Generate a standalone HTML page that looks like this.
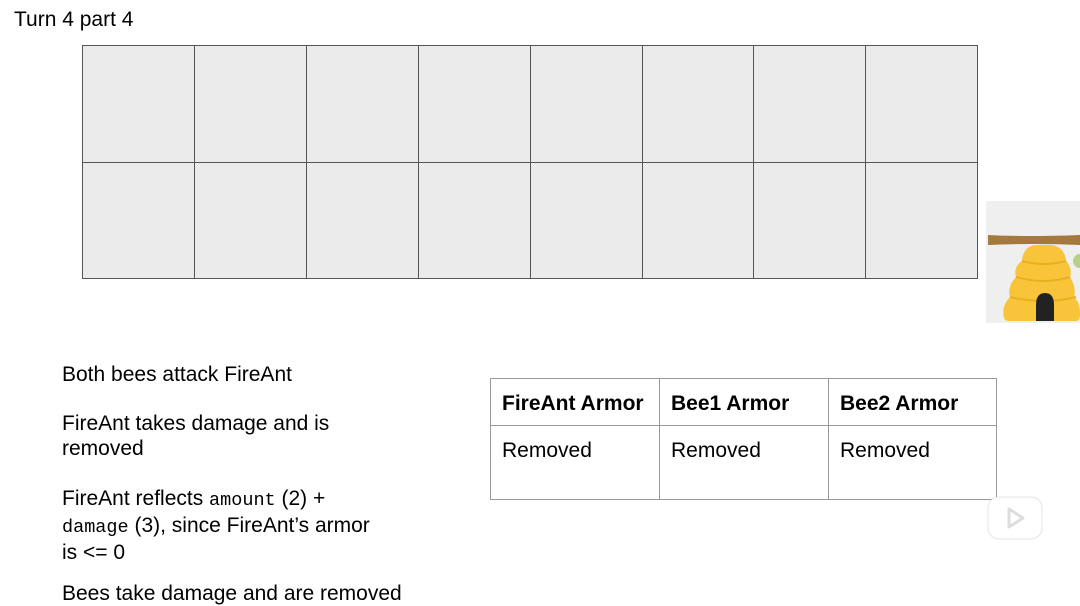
<!DOCTYPE html><html><head><style>
body{margin:0;width:1080px;height:604px;background:#fff;font-family:"Liberation Sans",sans-serif;position:relative;overflow:hidden;color:#000}
.a{position:absolute}
.c{position:absolute;background:#ebebeb;border:1px solid #555;box-sizing:border-box}
p{margin:0;font-size:21px;line-height:25px;position:absolute;left:0;width:300px}
code{font-family:"Liberation Mono",monospace;font-size:18.5px}
td{border:1px solid #999;padding:0 11px;vertical-align:top;font-size:21px}
</style></head><body>
<div class="a" style="left:14px;top:8px;font-size:21px">Turn 4 part 4</div>
<div id="g"></div>
<script>
var g=document.getElementById('g'),h='';
for(var r=0;r<2;r++)for(var i=0;i<8;i++){var x=82+Math.round(i*111.9),x2=82+Math.round((i+1)*111.9);h+='<div class="c" style="left:'+x+'px;top:'+(r?162:45)+'px;width:'+(x2-x+1)+'px;height:'+(r?117:118)+'px"></div>';}
g.innerHTML=h;
</script>
<div class="a" style="left:986px;top:201px;width:94px;height:122px;background:#efefef"></div>
<svg class="a" style="left:986px;top:201px" width="94" height="122">
<path d="M2 34 Q40 36 94 34 L94 44 Q50 42 2 44Z" fill="#a5783f"/>
<circle cx="94" cy="60" r="7" fill="#b7cf86"/>
<path d="M50 44 C40 44 36 54 36 60 C30 64 28 70 30 76 C24 82 22 90 24 96 C18 102 16 110 18 116 C18 119 20 120 24 120 L90 120 C94 120 94 116 94 112 C94 104 92 100 88 96 C90 90 88 82 84 76 C86 70 84 64 80 60 C80 52 74 44 64 44Z" fill="#f8c53a"/>
<path d="M36 60 Q58 66 80 60 M30 76 Q58 84 84 76 M24 96 Q58 104 90 96" stroke="#e8b020" stroke-width="2" fill="none"/>
<path d="M50 120 L50 104 Q50 92 59 92 Q68 92 68 104 L68 120Z" fill="#222"/>
</svg>
<div class="a" style="left:62px;top:362px;width:330px">
<p style="top:0">Both bees attack FireAnt</p>
<p style="top:49px;width:290px">FireAnt takes damage and is removed</p>
<p style="top:124px;width:320px">FireAnt reflects <code>amount</code> (2) + <code>damage</code> (3), since FireAnt’s armor is &lt;= 0</p>
<p style="top:219px;width:360px">Bees take damage and are removed</p>
</div>
<table class="a" style="left:490px;top:378px;border-collapse:collapse;width:507px">
<tr style="height:47px"><td style="vertical-align:middle;font-weight:bold;width:146px;padding-top:4px">FireAnt Armor</td><td style="vertical-align:middle;font-weight:bold;width:146px;padding-top:4px">Bee1 Armor</td><td style="vertical-align:middle;font-weight:bold;padding-top:4px">Bee2 Armor</td></tr>
<tr style="height:74px"><td style="padding-top:13px">Removed</td><td style="padding-top:13px">Removed</td><td style="padding-top:13px">Removed</td></tr>
</table>
<svg class="a" style="left:985px;top:486px" width="60" height="56">
<path d="M22 12 L28 4 M38 12 L32 4" stroke="#fff" stroke-width="3" stroke-linecap="round"/>
<rect x="3" y="11" width="54" height="42" rx="11" fill="#fff" stroke="#e4e4e4"/>
<path d="M24 23 L24 41 L38 32Z" fill="none" stroke="#ddd" stroke-width="3" stroke-linejoin="round"/>
</svg>
</body></html>
